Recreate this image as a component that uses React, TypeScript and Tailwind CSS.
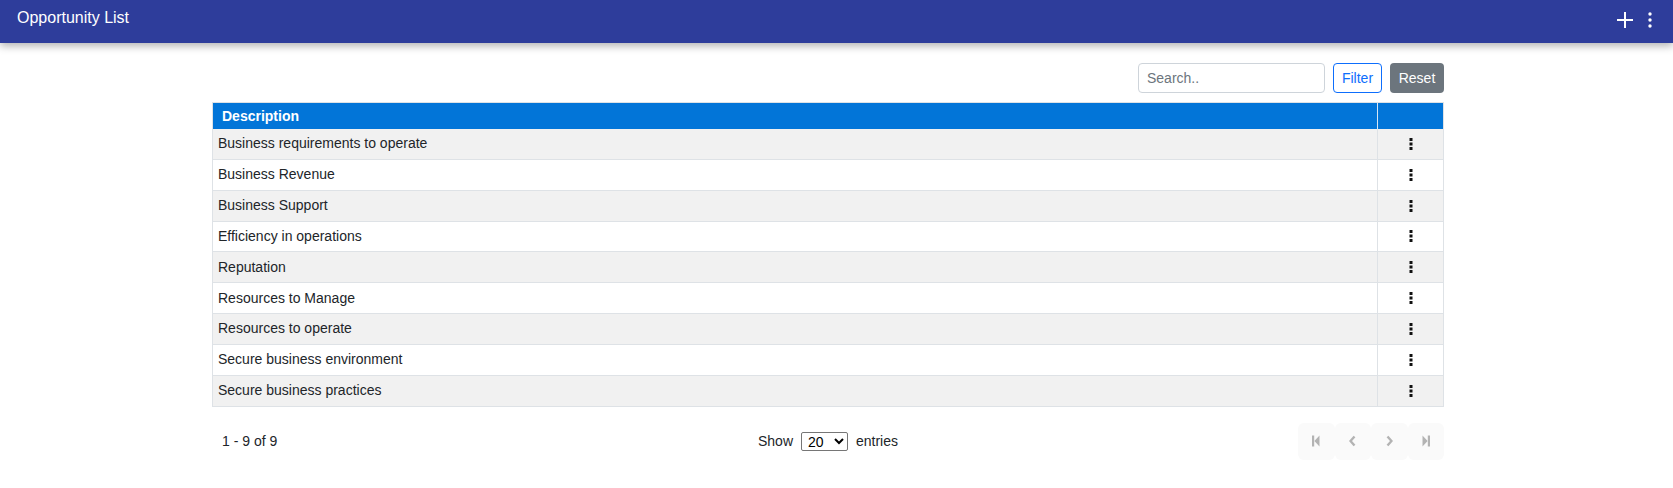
import { useState } from "react";

const rows = [
  "Business requirements to operate",
  "Business Revenue",
  "Business Support",
  "Efficiency in operations",
  "Reputation",
  "Resources to Manage",
  "Resources to operate",
  "Secure business environment",
  "Secure business practices",
];

function Kebab() {
  return (
    <svg width="4" height="12" viewBox="0 0 4 12" className="block">
      <rect x="0.5" y="0" width="3" height="3" fill="#111" />
      <rect x="0.5" y="4.5" width="3" height="3" fill="#111" />
      <rect x="0.5" y="9" width="3" height="3" fill="#111" />
    </svg>
  );
}

function PageIcon({ kind }: { kind: number }) {
  const c = "#b3b3b3";
  if (kind === 0)
    return (
      <svg width="8" height="12" viewBox="0 0 8 12">
        <rect x="0" y="0.5" width="2.2" height="11" fill={c} />
        <polygon points="7.5,0.5 2.4,6 7.5,11.5" fill={c} />
      </svg>
    );
  if (kind === 3)
    return (
      <svg width="8" height="12" viewBox="0 0 8 12">
        <rect x="5.8" y="0.5" width="2.2" height="11" fill={c} />
        <polygon points="0.5,0.5 5.6,6 0.5,11.5" fill={c} />
      </svg>
    );
  return (
    <svg width="7" height="12" viewBox="0 0 7 12">
      <polyline
        points={kind === 1 ? "5.5,1.5 1.5,6 5.5,10.5" : "1.5,1.5 5.5,6 1.5,10.5"}
        fill="none"
        stroke={c}
        strokeWidth="2.4"
      />
    </svg>
  );
}

export default function App() {
  const [search, setSearch] = useState("");
  const [pageSize, setPageSize] = useState("20");

  return (
    <div className="min-h-screen bg-white font-['Liberation_Sans',Arial,sans-serif] text-[#212529]">
      {/* Top bar */}
      <div className="flex h-[43px] items-start justify-between bg-[#2e3d9b] pl-[17px] pr-[21px] pt-[8px] shadow-[0_3px_8px_rgba(0,0,0,0.3)]">
        <span className="text-[16px] leading-[20px] text-white">Opportunity List</span>
        <div className="flex items-center gap-[15px] pt-[4px]">
          <svg width="16" height="16" viewBox="0 0 16 16">
            <path d="M8 0v16M0 8h16" stroke="white" strokeWidth="2" />
          </svg>
          <svg width="4" height="16" viewBox="0 0 4 16">
            <circle cx="2" cy="2" r="1.7" fill="white" />
            <circle cx="2" cy="8" r="1.7" fill="white" />
            <circle cx="2" cy="14" r="1.7" fill="white" />
          </svg>
        </div>
      </div>

      <div className="ml-[212px] w-[1232px] pt-[20px]">
        {/* Search bar */}
        <div className="flex justify-end gap-[8px]">
          <input
            value={search}
            onChange={(e) => setSearch(e.target.value)}
            placeholder="Search.."
            className="h-[30px] w-[187px] rounded-[4px] border border-[#ced4da] px-[8px] text-[14px] text-[#212529] outline-none placeholder:text-[#6c757d]"
          />
          <button className="h-[30px] w-[49px] rounded-[4px] border border-[#0d6efd] bg-white text-[14px] text-[#0d6efd]">
            Filter
          </button>
          <button className="h-[30px] w-[54px] rounded-[4px] bg-[#6c757d] text-[14px] text-white">
            Reset
          </button>
        </div>

        {/* Table */}
        <div className="mt-[9px] border-x border-t border-[#dee2e6] text-[14px]">
          <div className="flex h-[26px] bg-[#0275d8] text-white">
            <div className="flex flex-1 items-center border-r border-[#d6e6f5] pl-[9px] font-bold">
              Description
            </div>
            <div className="w-[65px]" />
          </div>
          {rows
            .filter((r) => r.toLowerCase().includes(search.toLowerCase()))
            .map((r, i) => (
              <div
                key={r}
                className={`flex h-[30.85px] border-b border-[#dee2e6] ${
                  i % 2 === 0 ? "bg-[#f1f1f1]" : "bg-white"
                }`}
              >
                <div className="flex flex-1 items-center border-r border-[#dee2e6] pl-[5px]">
                  {r}
                </div>
                <div className="flex w-[65px] items-center justify-center">
                  <Kebab />
                </div>
              </div>
            ))}
        </div>

        {/* Footer */}
        <div className="mt-[16px] flex h-[37px] items-center justify-between text-[14px]">
          <div className="w-[300px] pl-[10px]">1 - 9 of 9</div>
          <div className="flex items-center">
            <span>Show</span>
            <select
              value={pageSize}
              onChange={(e) => setPageSize(e.target.value)}
              className="ml-[8px] mr-[8px] h-[19px] w-[47px] rounded-[2px] border border-[#767676] bg-white px-[2px] text-[14px] leading-[16px] text-black"
            >
              <option value="10">10</option>
              <option value="20">20</option>
              <option value="50">50</option>
            </select>
            <span>entries</span>
          </div>
          <div className="flex w-[300px] justify-end">
            <div className="flex">
              {[0, 1, 2, 3].map((k) => (
                <button
                  key={k}
                  className="flex h-[37px] w-[36.5px] items-center justify-center rounded-[6px] bg-[#fafafa]"
                >
                  <PageIcon kind={k} />
                </button>
              ))}
            </div>
          </div>
        </div>
      </div>
    </div>
  );
}
